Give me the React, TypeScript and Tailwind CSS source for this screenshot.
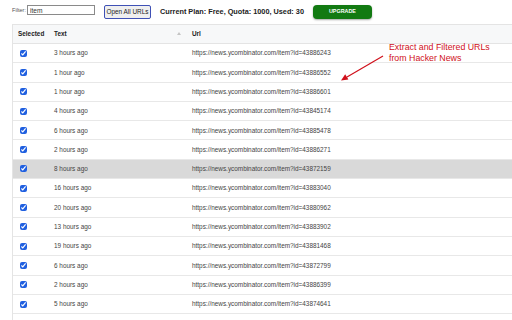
import React from 'react'

const rows: Array<{ text: string; id: string }> = [
    { text: '3 hours ago', id: '43886243' },
    { text: '1 hour ago', id: '43886552' },
    { text: '1 hour ago', id: '43886601' },
    { text: '4 hours ago', id: '43845174' },
    { text: '6 hours ago', id: '43885478' },
    { text: '2 hours ago', id: '43886271' },
    { text: '8 hours ago', id: '43872159' },
    { text: '16 hours ago', id: '43883040' },
    { text: '20 hours ago', id: '43880962' },
    { text: '13 hours ago', id: '43883902' },
    { text: '19 hours ago', id: '43881468' },
    { text: '6 hours ago', id: '43872799' },
    { text: '2 hours ago', id: '43886399' },
    { text: '5 hours ago', id: '43874641' },
    { text: '10 hours ago', id: '43866341' },
]

export default function App() {
    return (
        <div className="relative h-[320px] w-[512px] overflow-hidden bg-white font-['Liberation_Sans',Arial,sans-serif]">
            {/* toolbar */}
            <div className="flex h-[24px] items-center pl-[12px]">
                <span className="mb-[3px] text-[5.6px] text-[#555]">Filter:</span>
                <input
                    readOnly
                    value="item"
                    className="mb-[4px] ml-[1px] h-[10px] w-[68px] border border-[#8a8a8a] bg-white px-[2px] text-[6.6px] leading-none text-[#333] outline-none"
                />
                <button className="ml-[9px] h-[14px] w-[47px] rounded-[2px] border border-[#3f51b5] bg-[#efefef] text-[6.4px] leading-none text-[#222]">
                    Open All URLs
                </button>
                <span className="ml-[9px] text-[7.3px] font-bold text-[#222]">Current Plan: Free, Quota: 1000, Used: 30</span>
                <button className="ml-[9px] h-[14px] w-[59px] rounded-[4px] bg-[#127a12] text-[5.4px] font-bold leading-none text-white shadow-[0_1px_2px_rgba(0,0,0,0.35)]">
                    UPGRADE
                </button>
            </div>

            {/* table */}
            <div className="ml-[12px] border-l border-t border-[#e4e4e4]">
                <div className="flex h-[19px] items-center border-b border-[#e4e4e4] bg-[#f7f8f9] text-[6.4px] font-bold text-[#222]">
                    <div className="w-[36px] pl-[5px]">Selected</div>
                    <div className="flex w-[138px] items-center justify-between pl-[5px] pr-[6px]">
                        <span>Text</span>
                        <svg width="4" height="3" viewBox="0 0 4 3">
                            <path d="M0 3 L2 0 L4 3 Z" fill="#c4c4c4" />
                        </svg>
                    </div>
                    <div className="pl-[5px]">Url</div>
                </div>
                {rows.map((row, i) => (
                    <div
                        key={i}
                        className={`flex h-[19.3px] items-center border-b border-[#e8e8e8] text-[6.4px] text-[#444] ${i === 6 ? 'bg-[#d9d9d9]' : 'bg-white'}`}
                    >
                        <div className="flex w-[36px] items-center pl-[7px]">
                            <input type="checkbox" readOnly checked className="m-0 h-[7px] w-[7px] accent-[#1f5fe0]" />
                        </div>
                        <div className="w-[138px] pl-[5px]">{row.text}</div>
                        <div className="pl-[5px]">https://news.ycombinator.com/item?id={row.id}</div>
                    </div>
                ))}
            </div>

            {/* annotation */}
            <div className="absolute left-[389px] top-[42px] text-[8.8px] leading-[10.7px] text-[#d0101b]">
                <div>Extract and Filtered URLs</div>
                <div>from Hacker News</div>
            </div>
            <svg className="absolute left-0 top-0" width="512" height="320" viewBox="0 0 512 320">
                <line x1="383" y1="56" x2="347" y2="77" stroke="#d0101b" strokeWidth="1.2" />
                <path d="M341 80.5 L345.2 74.2 L348.4 79.6 Z" fill="#d0101b" />
            </svg>
        </div>
    )
}
